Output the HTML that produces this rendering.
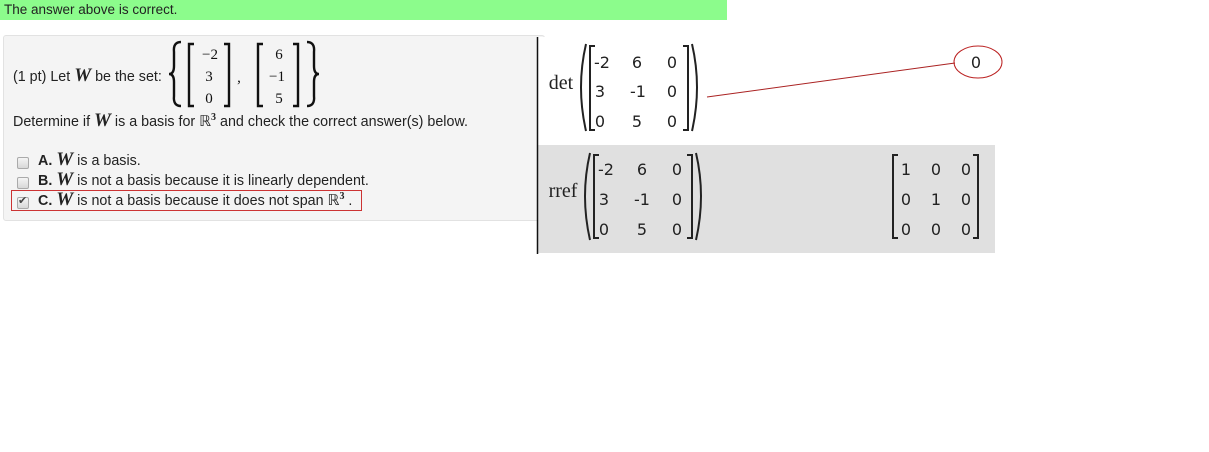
<!DOCTYPE html>
<html><head><meta charset="utf-8"><style>
html,body{margin:0;padding:0;width:1209px;height:452px;background:#fff;overflow:hidden;position:relative;font-family:"Liberation Sans",Arial,sans-serif;font-size:14.3px;color:#222}
.a{position:absolute;white-space:nowrap}
.w{font-family:"Liberation Serif",serif;font-style:italic;font-weight:bold;font-size:19px}
.s{font-family:"Liberation Serif",serif;font-size:15px}
.cb{position:absolute;left:17px;width:10px;height:10px;border:1px solid #aaa;border-radius:2px;background:linear-gradient(#f4f4f4,#d8d8d8)}
</style></head><body>
<div class="a" style="left:0;top:0;width:727px;height:20px;background:#8cfc8c"></div>
<div class="a" style="left:4px;top:2px;font-size:13.5px;color:#222">The answer above is correct.</div>
<div class="a" style="left:3px;top:35px;width:540px;height:184px;background:#f4f4f4;border:1px solid #e2e2e2;border-radius:3px"></div>

<div class="a" style="left:13px;top:65px">(1 pt) Let <span class="w">W</span> be the set:</div>
<svg class="a" style="left:0;top:0" width="540" height="230">
<g fill="none" stroke="#111" stroke-width="2.4">
<path d="M181 42 Q173 42 174 52 L174 66 Q174 74 169 74 Q174 74 174 82 L174 96 Q173 106 181 106"/>
<path d="M307 42 Q315 42 314 52 L314 66 Q314 74 319 74 Q314 74 314 82 L314 96 Q315 106 307 106"/>
<path d="M194 44 H189 V106 H194"/><path d="M224 44 H229 V106 H224"/>
<path d="M263 44 H258 V106 H263"/><path d="M293 44 H298 V106 H293"/>
</g>
<g font-family="Liberation Serif,serif" font-size="15" fill="#111" text-anchor="middle">
<text x="210" y="59">−2</text><text x="209" y="81">3</text><text x="209" y="103">0</text>
<text x="279" y="59">6</text><text x="277" y="81">−1</text><text x="279" y="103">5</text>
<text x="239" y="82">,</text>
</g></svg>
<div class="a" style="left:13px;top:110px">Determine if <span class="w">W</span> is a basis for <span class="s">ℝ<sup style="font-size:10px;font-weight:bold">3</sup></span> and check the correct answer(s) below.</div>

<div class="cb" style="top:157px"></div>
<div class="cb" style="top:177px"></div>
<div class="cb" style="top:197px"></div>
<div class="a" style="left:18px;top:194px;font-size:11px;color:#444">✔</div>
<div class="a" style="left:38px;top:149px"><b>A.</b> <span class="w">W</span> is a basis.</div>
<div class="a" style="left:38px;top:169px"><b>B.</b> <span class="w">W</span> is not a basis because it is linearly dependent.</div>
<div class="a" style="left:38px;top:189px"><b>C.</b> <span class="w">W</span> is not a basis because it does not span <span class="s">ℝ<sup style="font-size:10px;font-weight:bold">3</sup></span> .</div>
<div class="a" style="left:11px;top:190px;width:349px;height:19px;border:1px solid #c33"></div>

<svg class="a" style="left:0;top:0" width="1209" height="452">
<rect x="538" y="37" width="457" height="108" fill="#fff"/>
<rect x="538" y="145" width="457" height="108" fill="#e0e0e0"/>
<line x1="537.5" y1="37" x2="537.5" y2="254" stroke="#111" stroke-width="1.5"/>
<g font-family="DejaVu Sans,sans-serif" font-size="16" fill="#222" text-anchor="middle">
<text x="561" y="89" font-family="Liberation Serif,serif" font-size="20">det</text>
<text x="602" y="68">-2</text><text x="637" y="68">6</text><text x="672" y="68">0</text>
<text x="600" y="97">3</text><text x="638" y="97">-1</text><text x="672" y="97">0</text>
<text x="600" y="127">0</text><text x="637" y="127">5</text><text x="672" y="127">0</text>
<text x="563" y="197" font-family="Liberation Serif,serif" font-size="20">rref</text>
<text x="606" y="175">-2</text><text x="642" y="175">6</text><text x="677" y="175">0</text>
<text x="604" y="205">3</text><text x="642" y="205">-1</text><text x="677" y="205">0</text>
<text x="604" y="235">0</text><text x="642" y="235">5</text><text x="677" y="235">0</text>
<text x="906" y="175">1</text><text x="936" y="175">0</text><text x="966" y="175">0</text>
<text x="906" y="205">0</text><text x="936" y="205">1</text><text x="966" y="205">0</text>
<text x="906" y="235">0</text><text x="936" y="235">0</text><text x="966" y="235">0</text>
<text x="976" y="68">0</text>
</g>
<g fill="none" stroke="#222" stroke-width="2">
<path d="M586 44 Q576 87 586 131"/><path d="M692 44 Q702 87 692 131"/>
<path d="M595 46 H590 V130 H595"/><path d="M683 46 H688 V130 H683"/>
<path d="M590 153 Q580 196 590 240"/><path d="M696 153 Q706 196 696 240"/>
<path d="M599 155 H594 V238 H599"/><path d="M687 155 H692 V238 H687"/>
<path d="M898 155 H893 V238 H898"/><path d="M973 155 H978 V238 H973"/>
</g>
<line x1="707" y1="97" x2="955" y2="63" stroke="#a22" stroke-width="1"/>
<ellipse cx="978" cy="62" rx="24" ry="16" fill="none" stroke="#b22" stroke-width="1"/>
</svg>
</body></html>
